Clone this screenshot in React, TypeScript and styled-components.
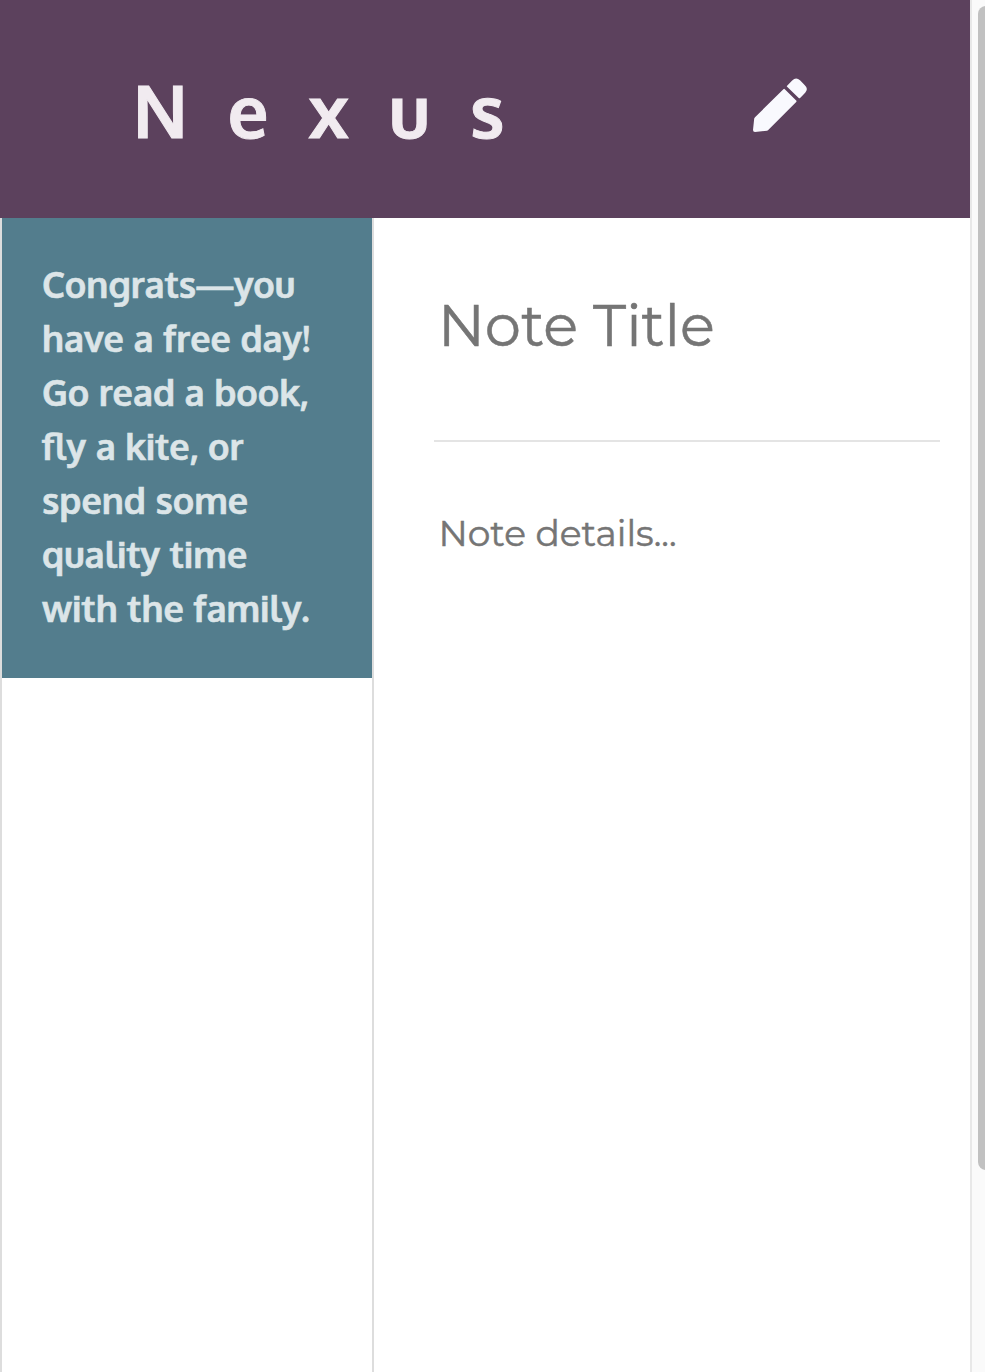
import React from "react";
import styled, { createGlobalStyle } from "styled-components";

const Global = createGlobalStyle`
  * { box-sizing: border-box; }
  html, body { margin: 0; overflow: hidden; background: #fff; }
`;
const Page = styled.div`
  display: flex;
  width: 985px;
  height: 1372px;
`;
const Main = styled.div`
  width: 970px;
  display: flex;
  flex-direction: column;
`;
const Header = styled.header`
  height: 218px;
  background: #5c415d;
  display: flex;
  justify-content: space-between;
  padding: 61px 163px 0 133px;
`;
const Logo = styled.h1`
  margin: 0;
  font: 700 72px/98px "Oxygen", "Open Sans", sans-serif;
  letter-spacing: 40px;
  color: #f1ebf0;
  -webkit-text-stroke: 1px #f1ebf0;
  white-space: nowrap;
`;
const Pencil = styled.svg`
  width: 54px;
  height: 54px;
  margin-top: 17px;
  flex: none;
`;
const Columns = styled.div`
  flex: 1;
  display: flex;
`;
const Sidebar = styled.aside`
  width: 374px;
  border: solid #ddd;
  border-width: 0 2px;
`;
const Message = styled.p`
  margin: 0;
  height: 460px;
  padding: 39px 40px 0;
  background: #537d8d;
  color: #dce5e8;
  font: 700 36px/54px "Oxygen", "Open Sans", sans-serif;
  -webkit-text-stroke: 0.6px #dce5e8;
`;
const Editor = styled.main`
  flex: 1;
  padding: 71px 30px 0 60px;
  color: #757575;
  font-family: "Montserrat", "Inter", sans-serif;
  -webkit-text-stroke: 0.5px #757575;
`;
const Title = styled.div`
  height: 153px;
  padding-left: 4px;
  border-bottom: 2px solid #e4e4e4;
  font-size: 57.6px;
  line-height: 72px;
`;
const Details = styled.div`
  padding: 64px 0 0 4.5px;
  font-size: 36px;
  line-height: 54px;
`;
const Track = styled.div`
  width: 15px;
  border-left: 2px solid #e8e8e8;
  background: #fafafa;
  padding: 6px 0 0 6px;
  overflow: hidden;
`;
const Thumb = styled.div`
  width: 16px;
  height: 1164px;
  border-radius: 8px;
  background: #c1c1c1;
`;

export default function App() {
  return (
    <Page>
      <Global />
      <Main>
        <Header>
          <Logo>Nexus</Logo>
          <Pencil viewBox="0 0 54 54" fill="#f9f9fe">
            <path d="M30.4 11.2Q31.1 10.5 31.8 11.2L43.2 22.6Q43.9 23.3 43.2 24L16 51.2 15 52.2 14 52.8 2 54Q0 54 0 52L1.2 40.5 2 39.3Z" />
            <path d="M34.1 7.7 39.2 2.5Q43-1.2 47 2.3L51.6 6.9Q55.8 10.7 52.2 14.7L47.1 20Q46.4 20.7 45.7 20L34.1 8.8Q33.5 8.3 34.1 7.7Z" />
          </Pencil>
        </Header>
        <Columns>
          <Sidebar>
            <Message>
              Congrats—you have a free day! Go read a book, fly a kite, or spend some quality time with the family.
            </Message>
          </Sidebar>
          <Editor>
            <Title>Note Title</Title>
            <Details>Note details...</Details>
          </Editor>
        </Columns>
      </Main>
      <Track><Thumb /></Track>
    </Page>
  );
}
